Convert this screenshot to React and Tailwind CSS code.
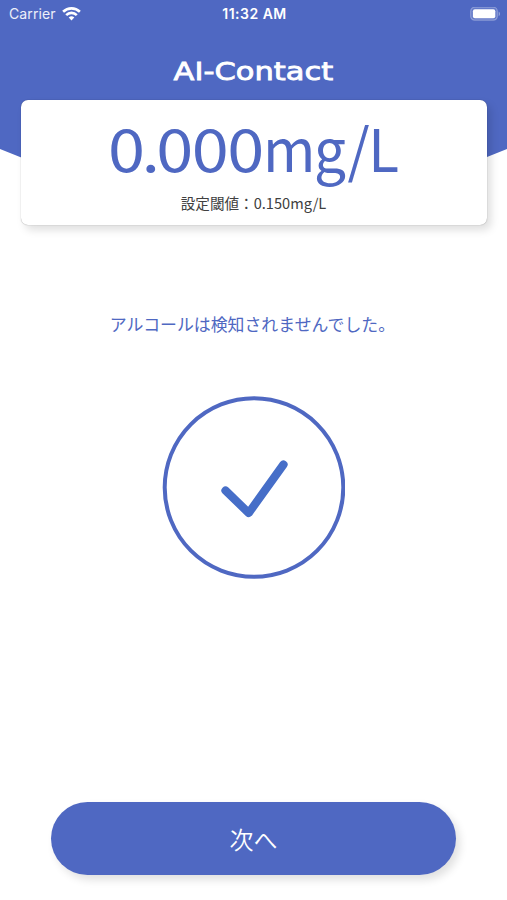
function WifiIcon() {
  return (
    <svg className="ml-[6px] h-[14px] w-[19px]" viewBox="0 0 19 14" fill="none" stroke="#fff" strokeWidth="2.6">
      <path d="M1.1 4.8a12 12 0 0 1 16.8 0" />
      <path d="M4.2 8.1a7.5 7.5 0 0 1 10.6 0" />
      <path d="M9.5 13.4 6.7 10.6a4 4 0 0 1 5.6 0Z" fill="#fff" stroke="none" />
    </svg>
  );
}

function BatteryIcon() {
  return (
    <svg className="h-[15px] w-[31px]" viewBox="0 0 31 15">
      <rect x="0.7" y="0.2" width="26.6" height="13" rx="4" fill="#fff" fillOpacity="0.12" stroke="#fff" strokeOpacity="0.3" strokeWidth="1.2" />
      <rect x="2.9" y="2.2" width="22.4" height="9" rx="2" fill="#fff" />
      <path d="M28.7 4.5v4.8c1.8-.8 1.8-4 0-4.8Z" fill="#fff" fillOpacity="0.4" />
    </svg>
  );
}

function StatusBar() {
  return (
    <div className="grid h-[28px] w-full grid-cols-[1fr_auto_1fr] items-center pl-[9px] pr-[6px] font-['Inter','Liberation_Sans',sans-serif] text-white">
      <div className="flex items-center text-[14px] leading-none tracking-[0.1px] text-white/90">
        Carrier
        <WifiIcon />
      </div>
      <div className="-ml-[1px] text-center text-[14px] font-semibold leading-none tracking-[0.5px]">11:32 AM</div>
      <div className="flex justify-end">
        <BatteryIcon />
      </div>
    </div>
  );
}

function Reading() {
  return (
    <div className="mt-[16px] flex h-[75px] w-full whitespace-nowrap pl-[87px] text-[59px] leading-[61px] text-[#4f68c2]">
      <div className="w-[155px] shrink-0">
        <span className="inline-block origin-left scale-x-[1.13] tracking-[-1.4px]">
          <span className="tracking-[-3.2px]">0.</span>000
        </span>
      </div>
      <span className="inline-block origin-left scale-x-[0.96] tracking-[-1.5px]">mg/L</span>
    </div>
  );
}

export default function App() {
  return (
    <div className="relative flex h-[900px] w-[507px] flex-col items-center overflow-hidden bg-white font-['Noto_Sans_CJK_JP',sans-serif]">
      <div className="absolute inset-x-0 top-0 h-[165px] bg-[#4f68c2] [clip-path:polygon(0_0,100%_0,100%_149px,487px_157px,467px_165px,40px_165px,20px_157px,0_149px)]" />
      <div className="relative flex w-full flex-col items-center">
        <StatusBar />
        <h1 className="flex h-[72px] origin-center scale-x-[1.22] items-center whitespace-nowrap pt-[14px] font-['DejaVu_Sans','Liberation_Sans',sans-serif] text-[25px] leading-none text-white [-webkit-text-stroke:0.8px_white]">
          AI-Contact
        </h1>
        <section className="ml-px flex h-[125px] w-[466px] flex-col items-center rounded-[7px] bg-white shadow-[4px_5px_8px_rgba(0,0,0,0.13),0_0_1px_rgba(0,0,0,0.45)]">
          <Reading />
          <div className="-ml-px h-[24px] whitespace-nowrap text-[14.6px] leading-[24px] text-[#404040]">設定閾値：0.150mg/L</div>
        </section>
      </div>
      <p className="-ml-[2px] mt-[85px] h-[28px] whitespace-nowrap text-[16.9px] leading-[28px] text-[#4f68c2]">アルコールは検知されませんでした。</p>
      <svg className="mt-[58px] h-[183px] w-[183px]" viewBox="0 0 183 183" fill="none">
        <circle cx="92" cy="91.5" r="89.3" stroke="#4f68c2" strokeWidth="4" />
        <path d="m63.5 94.5 23.2 22.5L121.5 68.5" stroke="#466ec8" strokeWidth="8.2" strokeLinecap="round" strokeLinejoin="round" />
      </svg>
      <button className="mt-[223px] h-[73px] w-[405px] rounded-full bg-[#4f68c2] text-[24px] font-[350] leading-[73px] text-white shadow-[4px_5px_8px_rgba(0,0,0,0.12)]">
        次へ
      </button>
    </div>
  );
}
